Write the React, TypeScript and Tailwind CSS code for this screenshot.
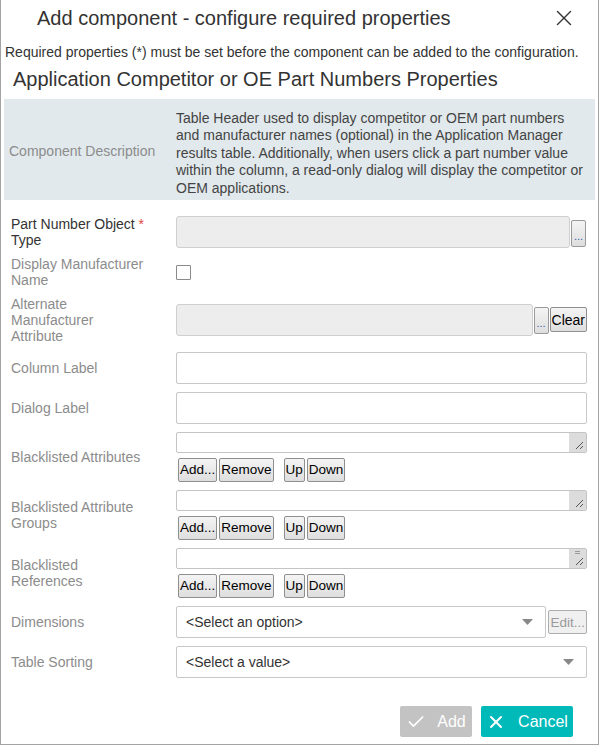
import { X, Check } from "lucide-react";

const font = { fontFamily: '"Liberation Sans", Arial, sans-serif' };

function SmallButton({ children, disabled }: { children: React.ReactNode; disabled?: boolean }) {
  return (
    <button
      className={
        "h-[24px] rounded-[2px] border px-[1px] text-[13.5px] leading-none " +
        (disabled
          ? "border-[#adadad] bg-[#f0f0f0] text-[#9a9a9a]"
          : "border-[#8f8f8f] bg-gradient-to-b from-[#f4f4f4] to-[#dedede] text-black")
      }
    >
      {children}
    </button>
  );
}

function DotsButton() {
  return (
    <button className="flex h-[27px] w-[15px] items-end justify-center rounded-[2px] border border-[#9a9a9a] bg-gradient-to-b from-[#f4f4f4] to-[#dedede] pb-[4px] text-[11px] leading-none text-[#3b5fa6]">
      ...
    </button>
  );
}

function Label({ children, required }: { children: React.ReactNode; required?: boolean }) {
  return (
    <div className="w-[165px] shrink-0 pr-[30px]">
      <div className={"text-[14px] leading-[16px] " + (required ? "text-[#333]" : "text-[#8c8c8c]")}>
        {children}
      </div>
    </div>
  );
}

function Row({ label, children }: { label: React.ReactNode; children: React.ReactNode }) {
  return (
    <div className="flex items-center">
      {label}
      <div className="flex min-w-0 flex-1 items-center">{children}</div>
    </div>
  );
}

function ListField({ grip }: { grip?: boolean }) {
  return (
    <div className="flex flex-1 flex-col gap-[5px]">
      <div className="flex h-[21px] rounded-[2px] border border-[#c4c4c4] bg-white">
        <div className="flex-1" />
        <div className="relative w-[17px] bg-[#dcdcdc]">
          {grip && <div className="absolute left-[6px] top-[2px] h-[3px] w-[5px] border-y border-[#999]" />}
          <svg className="absolute bottom-[2px] right-[2px]" width="9" height="9" viewBox="0 0 9 9">
            <path d="M8 1 L1 8 M8 5 L5 8" stroke="#555" strokeWidth="1" />
          </svg>
        </div>
      </div>
      <div className="flex gap-[2px] pl-[2px]">
        <SmallButton>Add...</SmallButton>
        <SmallButton>Remove</SmallButton>
        <div className="w-[6px]" />
        <SmallButton>Up</SmallButton>
        <SmallButton>Down</SmallButton>
      </div>
    </div>
  );
}

function Select({ text }: { text: string }) {
  return (
    <div className="flex h-[32px] flex-1 items-center justify-between rounded-[2px] border border-[#c8c8c8] bg-white pl-[9px] pr-[12px] text-[14px] text-[#333]">
      <span>{text}</span>
      <svg width="11" height="6" viewBox="0 0 11 6">
        <path d="M0 0 H11 L5.5 6 Z" fill="#888" />
      </svg>
    </div>
  );
}

export default function App() {
  return (
    <div className="h-[747px] w-[601px] bg-white" style={font}>
      <div className="flex h-[745px] w-[599px] flex-col border border-t-0 border-[#a3a3a3]">
        <div className="flex h-[34px] items-center justify-between pl-[36px] pr-[21px] pt-[1px]">
          <h1 className="text-[20px] text-[#333]">Add component - configure required properties</h1>
          <X size={26} strokeWidth={1.3} className="text-[#333]" />
        </div>
        <p className="mt-[10px] pl-[4px] text-[14px] leading-[16px] text-[#333]">
          Required properties (*) must be set before the component can be added to the configuration.
        </p>
        <h2 className="mt-[7px] pl-[12px] text-[20px] leading-[24px] text-[#333]">
          Application Competitor or OE Part Numbers Properties
        </h2>
        <div className="mx-[3px] mt-[8px] flex h-[101px] items-center bg-[#e1e9ec]">
          <div className="w-[172px] shrink-0 pl-[5px] pt-[4px] text-[14px] text-[#8c8c8c]">
            Component Description
          </div>
          <div className="w-[412px] pt-[8px] text-[14px] leading-[17.5px] text-[#444]">
            Table Header used to display competitor or OEM part numbers and manufacturer names (optional) in the
            Application Manager results table. Additionally, when users click a part number value within the column, a
            read-only dialog will display the competitor or OEM applications.
          </div>
        </div>

        <div className="mt-[16px] flex flex-col gap-[8px] pl-[10px] pr-[11px]">
          <Row
            label={
              <Label required>
                Part Number Object <span className="text-[#e0493c]">*</span>
                <br />
                Type
              </Label>
            }
          >
            <div className="h-[32px] flex-1 rounded-[3px] border border-[#cfcfcf] bg-[#ededed]" />
            <div className="ml-[1px] mr-[1px] self-end pb-[1px]">
              <DotsButton />
            </div>
          </Row>
          <Row label={<Label>Display Manufacturer Name</Label>}>
            <div className="h-[15px] w-[15px] rounded-[1px] border-[1.5px] border-[#8a8a8a] bg-white" />
          </Row>
          <Row label={<Label>Alternate Manufacturer Attribute</Label>}>
            <div className="h-[32px] flex-1 rounded-[3px] border border-[#cfcfcf] bg-[#ededed]" />
            <div className="ml-[1px] flex gap-[1px] self-end pb-[2px]">
              <DotsButton />
              <button className="h-[25px] rounded-[2px] border border-[#8f8f8f] bg-gradient-to-b from-[#f4f4f4] to-[#dedede] px-[1px] text-[14px] leading-none text-black">
                Clear
              </button>
            </div>
          </Row>
          <Row label={<Label>Column Label</Label>}>
            <div className="h-[32px] flex-1 rounded-[2px] border border-[#c8c8c8] bg-white" />
          </Row>
          <Row label={<Label>Dialog Label</Label>}>
            <div className="h-[32px] flex-1 rounded-[2px] border border-[#c8c8c8] bg-white" />
          </Row>
          <Row label={<Label>Blacklisted Attributes</Label>}>
            <ListField />
          </Row>
          <Row label={<Label>Blacklisted Attribute Groups</Label>}>
            <ListField />
          </Row>
          <Row label={<Label>Blacklisted References</Label>}>
            <ListField grip />
          </Row>
          <Row label={<Label>Dimensions</Label>}>
            <Select text="<Select an option>" />
            <div className="ml-[2px]">
              <SmallButton disabled>Edit...</SmallButton>
            </div>
          </Row>
          <Row label={<Label>Table Sorting</Label>}>
            <Select text="<Select a value>" />
          </Row>
        </div>

        <div className="mt-auto mb-[7px] flex justify-end gap-[9px] pr-[25px]">
          <button className="flex h-[31px] w-[72px] items-center justify-center gap-[11px] rounded-[2px] bg-[#c3c3c3] text-[16px] text-white">
            <Check size={20} strokeWidth={2} />
            Add
          </button>
          <button className="flex h-[31px] w-[92px] items-center justify-center gap-[12px] rounded-[2px] bg-[#00b9b9] text-[16px] text-white">
            <X size={20} strokeWidth={2.4} />
            Cancel
          </button>
        </div>
      </div>
    </div>
  );
}
